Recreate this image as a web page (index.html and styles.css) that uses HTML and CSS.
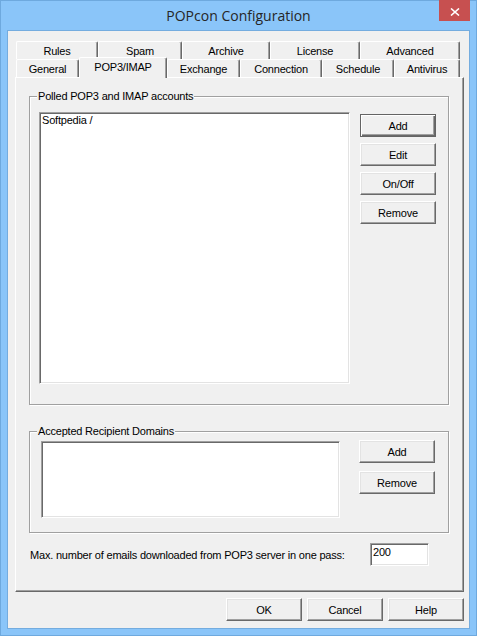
FILE: index.html
```html
<!DOCTYPE html>
<html lang="en">
<head>
  <meta charset="utf-8">
  <title>POPcon Configuration</title>
  <link rel="stylesheet" href="styles.css">
</head>
<body>
  <div class="window">
    <div class="titlebar">
      <span></span>
      <div class="title">POPcon Configuration</div>
      <button class="close" aria-label="Close">
        <svg width="10" height="8" viewBox="0 0 10 8"><path d="M1 0.5 L9 7.5 M9 0.5 L1 7.5" stroke="#fff" stroke-width="1.6" fill="none"/></svg>
      </button>
    </div>

    <div class="client">
      <div class="tabs">
        <div class="tab-row back">
          <div class="tab t-rules">Rules</div>
          <div class="tab t-spam">Spam</div>
          <div class="tab t-archive">Archive</div>
          <div class="tab t-license">License</div>
          <div class="tab t-advanced">Advanced</div>
        </div>
        <div class="tab-row front">
          <div class="tab t-general">General</div>
          <div class="tab t-pop active">POP3/IMAP</div>
          <div class="tab t-exchange">Exchange</div>
          <div class="tab t-connection">Connection</div>
          <div class="tab t-schedule">Schedule</div>
          <div class="tab t-antivirus">Antivirus</div>
        </div>
      </div>

      <div class="panel">
        <div class="group accounts">
          <div class="group-title">Polled POP3 and IMAP accounts</div>
          <div class="group-body">
            <div class="listbox">
              <div class="item">Softpedia /</div>
            </div>
            <div class="btn-col">
              <button class="btn default">Add</button>
              <button class="btn">Edit</button>
              <button class="btn">On/Off</button>
              <button class="btn">Remove</button>
            </div>
          </div>
        </div>

        <div class="group domains">
          <div class="group-title">Accepted Recipient Domains</div>
          <div class="group-body">
            <div class="listbox"></div>
            <div class="btn-col">
              <button class="btn">Add</button>
              <button class="btn">Remove</button>
            </div>
          </div>
        </div>

        <div class="max-row">
          <label for="maxmails">Max. number of emails downloaded from POP3 server in one pass:</label>
          <input id="maxmails" class="field" type="text" value="200">
        </div>
      </div>

      <div class="dialog-buttons">
        <button class="btn">OK</button>
        <button class="btn">Cancel</button>
        <button class="btn">Help</button>
      </div>
    </div>
  </div>
</body>
</html>
```

FILE: styles.css
```css
* {
  box-sizing: border-box;
}

body {
  margin: 0;
  font-family: "Liberation Sans", Arial, sans-serif;
  font-size: 11px;
  letter-spacing: -0.2px;
  color: #000;
}

.window {
  display: flex;
  flex-direction: column;
  width: 477px;
  height: 636px;
  padding: 0 7px 7px;
  background: #8ac5f9;
  border: 1px solid #6ea9de;
}

/* title bar */
.titlebar {
  display: grid;
  grid-template-columns: 1fr auto 1fr;
  align-items: center;
  height: 30px;
  margin: 0 -7px;
}

.title {
  font-family: "Open Sans", "Noto Sans", sans-serif;
  font-size: 14px;
  letter-spacing: 0;
  color: #262626;
  padding-bottom: 1px;
}

.close {
  justify-self: end;
  align-self: start;
  display: flex;
  align-items: center;
  justify-content: center;
  width: 31px;
  height: 21px;
  margin: -1px 6px 0 0;
  padding: 2px 0 0;
  border: 0;
  background: #c75050;
}

/* client area */
.client {
  flex: 1;
  display: flex;
  flex-direction: column;
  background: #f0f0f0;
  box-shadow: 0 0 0 1px #74acdf;
}

.tabs {
  width: 444px;
  margin: 10px 0 0 8px;
}

.tab-row {
  display: flex;
  align-items: flex-end;
}

.tab-row.front {
  margin-top: -2px;
}

.tab {
  display: flex;
  align-items: center;
  justify-content: center;
  height: 18px;
  background: #f0f0f0;
  border: 1px solid;
  border-color: #fff #696969 transparent #fff;
  border-bottom: 0;
  border-radius: 2px 2px 0 0;
  box-shadow: inset -1px 0 #a0a0a0;
}

.tab.active {
  position: relative;
  height: 21px;
  margin-bottom: -1px;
  padding-bottom: 3px;
}

.t-rules { width: 82px; }
.t-spam { width: 84px; }
.t-archive { width: 88px; }
.t-license { width: 90px; }
.t-advanced { width: 100px; }

.t-general { width: 63px; }
.t-pop { width: 88px; }
.t-exchange { width: 73px; }
.t-connection { width: 82px; }
.t-schedule { width: 72px; }
.t-antivirus { width: 66px; }

.panel {
  width: 449px;
  height: 515px;
  margin-left: 7px;
  padding: 18px 0 0 13px;
  border: 1px solid;
  border-color: #fff #696969 #696969 #fff;
  box-shadow: inset -1px -1px #a0a0a0;
}

/* group boxes */
.group {
  width: 420px;
  border: 1px solid #a0a0a0;
  box-shadow: inset 1px 1px #fff, 1px 1px #fff;
}

.group-title {
  width: fit-content;
  margin: -7px 0 0 7px;
  padding: 0 1px;
  line-height: 13px;
  background: #f0f0f0;
}

.group-body {
  display: flex;
  align-items: flex-start;
}

.accounts {
  height: 309px;
}

.accounts .group-body {
  padding: 9px 0 0 9px;
}

.accounts .listbox {
  width: 311px;
  height: 272px;
}

.accounts .btn-col {
  gap: 6px;
  margin: 2px 0 0 10px;
}

.domains {
  height: 102px;
  margin-top: 26px;
}

.domains .group-body {
  padding-left: 11px;
}

.domains .listbox {
  width: 299px;
  height: 77px;
  margin-top: 3px;
}

.domains .btn-col {
  gap: 8px;
  margin: 2px 0 0 19px;
}

.listbox {
  padding: 1px 2px;
  background: #fff;
  border: 1px solid;
  border-color: #a0a0a0 #fff #fff #a0a0a0;
  box-shadow: inset 1px 1px #696969, inset -1px -1px #e3e3e3;
}

.item {
  line-height: 13px;
}

.btn-col {
  display: flex;
  flex-direction: column;
}

/* buttons */
.btn {
  width: 76px;
  height: 23px;
  padding: 0;
  font: inherit;
  letter-spacing: inherit;
  color: #000;
  background: #f0f0f0;
  border: 1px solid;
  border-color: #fff #696969 #696969 #fff;
  box-shadow: inset -1px -1px #a0a0a0, inset 1px 1px #e3e3e3;
}

.btn.default {
  border-color: #646464;
  box-shadow: inset 1px 1px #fff, inset -1px -1px #696969, inset -2px -2px #a0a0a0;
}

.max-row {
  display: flex;
  align-items: center;
  justify-content: space-between;
  width: 400px;
  margin-top: 10px;
  padding-left: 1px;
}

.field {
  width: 59px;
  height: 23px;
  padding: 0 1px 6px 2px;
  font: inherit;
  letter-spacing: inherit;
  background: #fff;
  border: 1px solid;
  border-color: #a0a0a0 #fff #fff #a0a0a0;
  box-shadow: inset 1px 1px #696969, inset -1px -1px #e3e3e3;
  outline: none;
}

.dialog-buttons {
  display: flex;
  justify-content: flex-end;
  gap: 5px;
  margin-top: 6px;
  padding-right: 5px;
}
```
